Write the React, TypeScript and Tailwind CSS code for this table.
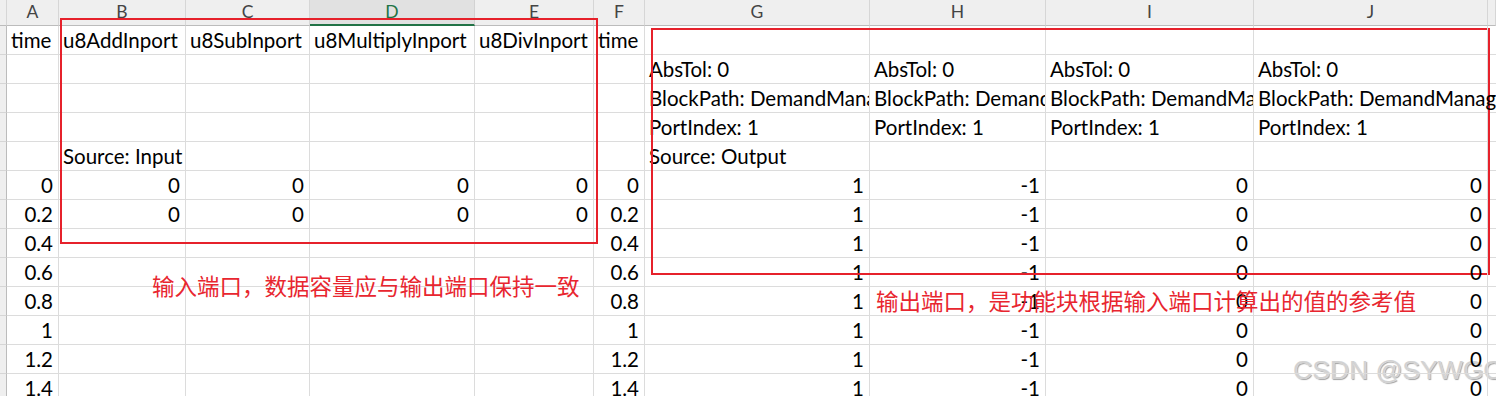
import React from 'react';

const LETTERS = ['', 'A', 'B', 'C', 'D', 'E', 'F', 'G', 'H', 'I', 'J', ''];

type Cell = string;

const headRows: Cell[][] = [
    ['time', 'u8AddInport', 'u8SubInport', 'u8MultiplyInport', 'u8DivInport', 'time', '', '', '', ''],
    ['', '', '', '', '', '', 'AbsTol: 0', 'AbsTol: 0', 'AbsTol: 0', 'AbsTol: 0'],
    ['', '', '', '', '', '', 'BlockPath: DemandManagement', 'BlockPath: DemandManagement', 'BlockPath: DemandManagement', 'BlockPath: DemandManagement'],
    ['', '', '', '', '', '', 'PortIndex: 1', 'PortIndex: 1', 'PortIndex: 1', 'PortIndex: 1'],
    ['', 'Source: Input', '', '', '', '', 'Source: Output', '', '', ''],
];

const times = ['0', '0.2', '0.4', '0.6', '0.8', '1', '1.2', '1.4'];

const dataRows: Cell[][] = times.map((t, i) => {
    const inp = i < 2 ? '0' : '';
    return [t, inp, inp, inp, inp, t, '1', '-1', '0', '0'];
});

const rows = [...headRows, ...dataRows];

const isNum = (s: string) => /^-?[\d.]+$/.test(s);

export default function App() {
    return (
        <div className="relative w-[1496px] h-[396px] overflow-hidden bg-white font-['Lato','Noto_Sans',sans-serif] text-black">
            <div className="grid grid-cols-[7px_52px_127px_124px_165px_119px_51px_225px_176px_208px_234px_8px]">
                {/* column headers */}
                {LETTERS.map((l, i) => (
                    <div
                        key={'h' + i}
                        className={
                            l === 'D'
                                ? 'h-[26px] flex items-center justify-center bg-[#e1e1e1] border-r border-[#d2d2d2] border-b-2 border-b-[#217346] text-[17.5px] text-[#217346]'
                                : 'h-[26px] flex items-center justify-center bg-[#efefef] border-r border-[#d6d6d6] border-b border-b-[#bcbcbc] text-[17.5px] text-[#444]'
                        }
                    >
                        {l}
                    </div>
                ))}

                {/* body */}
                {rows.map((r, ri) => (
                    <React.Fragment key={ri}>
                        <div className="h-[29px] bg-[#efefef] border-r border-[#bcbcbc] border-b border-b-[#d6d6d6]" />
                        {r.map((c, ci) => (
                            <div
                                key={ci}
                                className={
                                    'h-[29px] flex items-end pb-[4px] border-r border-b border-[#dcdcdc] text-[20.5px] leading-none whitespace-nowrap ' +
                                    (isNum(c) ? 'justify-end pr-[5px]' : 'pl-[4px]') +
                                    (ci === 9 ? ' overflow-visible relative z-10' : ' overflow-hidden')
                                }
                            >
                                {c}
                            </div>
                        ))}
                        <div className="h-[29px] border-b border-[#dcdcdc]" />
                    </React.Fragment>
                ))}
            </div>

            {/* red annotation boxes */}
            <div className="absolute left-[60px] top-[18px] w-[538px] h-[226px] border-2 border-[#e6212b]" />
            <div className="absolute left-[651px] top-[28px] w-[839px] h-[247px] border-2 border-[#e6212b]" />

            {/* notes */}
            <div className="absolute left-[152px] top-[272px] text-[22.5px] leading-[26px] text-[#e8262f] font-['Noto_Sans_CJK_SC',sans-serif]">
                输入端口，数据容量应与输出端口保持一致
            </div>
            <div className="absolute left-[876px] top-[287px] text-[22.5px] leading-[26px] text-[#e8262f] font-['Noto_Sans_CJK_SC',sans-serif]">
                输出端口，是功能块根据输入端口计算出的值的参考值
            </div>

            {/* watermark */}
            <div className="absolute left-[1293px] top-[357px] text-[26.5px] leading-none whitespace-nowrap text-[#d2d2d2] font-['Liberation_Sans',sans-serif] [text-shadow:0_0_1px_#fff,1px_1px_1px_#9a9a9a]">
                CSDN @SYWGO
            </div>
        </div>
    );
}
